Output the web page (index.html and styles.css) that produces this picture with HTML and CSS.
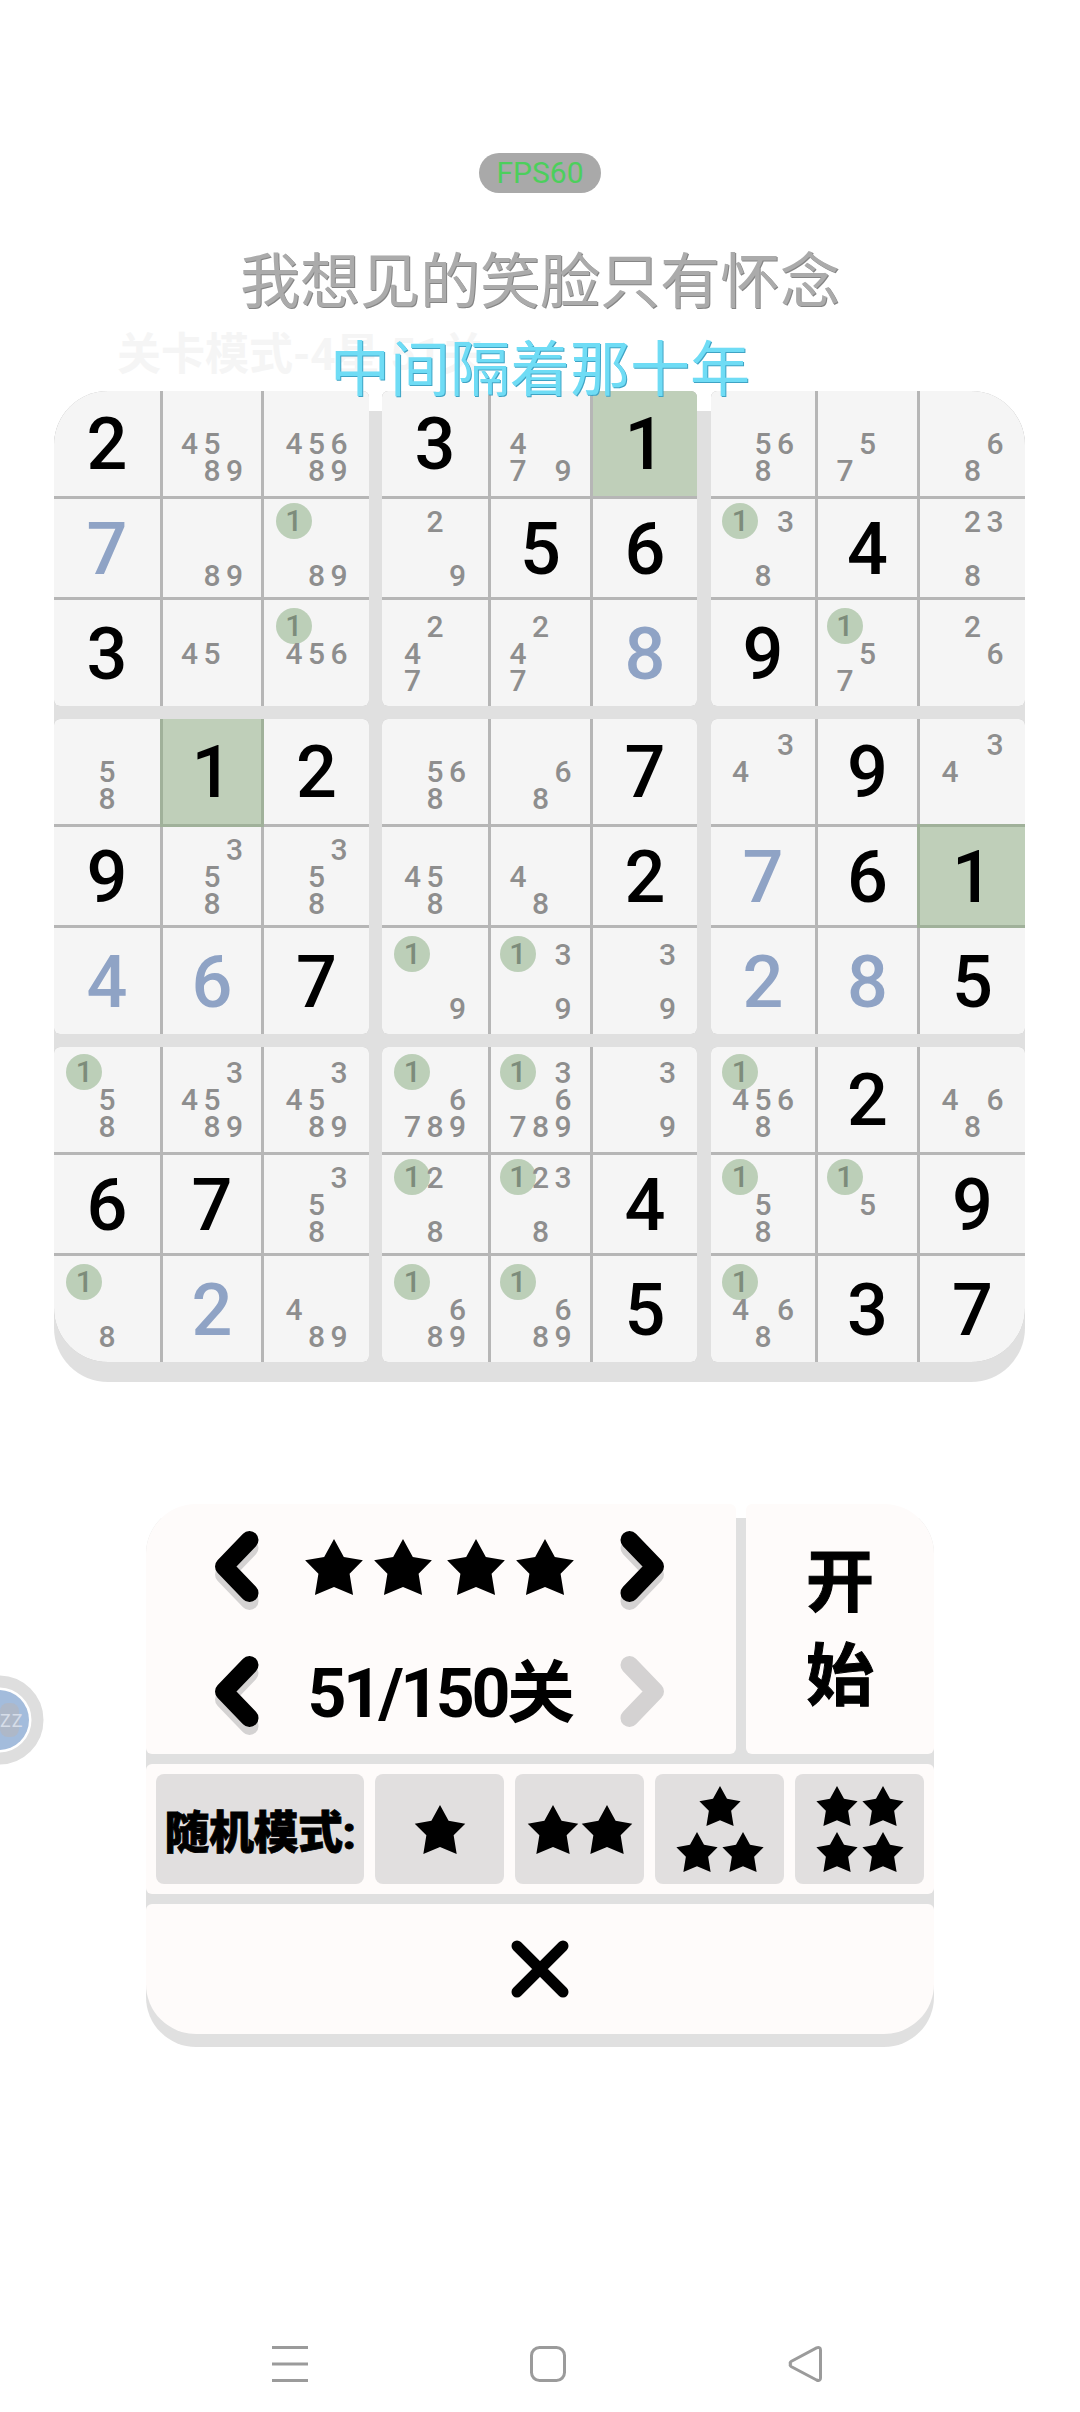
FILE: index.html
```html
<!DOCTYPE html>
<html lang="zh-CN">
<head>
    <meta charset="UTF-8">
    <meta name="viewport" content="width=device-width, initial-scale=1.0">
    <title>数独</title>
    <link rel="stylesheet" href="styles.css">
</head>
<body>
    <svg class="defs" width="0" height="0">
        <symbol id="star" viewBox="0 0 100 97">
            <polygon points="50,0 67,31 100,37 77,60 83,97 50,83 17,97 23,60 0,37 33,31"/>
        </symbol>
        <symbol id="chevron-left" viewBox="0 0 44 71">
            <path d="M34.5 9 L9 35.5 L34.5 62" fill="none" stroke="currentColor" stroke-width="18" stroke-linecap="round" stroke-linejoin="round"/>
        </symbol>
        <symbol id="chevron-right" viewBox="0 0 44 71">
            <path d="M9.5 9 L35 35.5 L9.5 62" fill="none" stroke="currentColor" stroke-width="18" stroke-linecap="round" stroke-linejoin="round"/>
        </symbol>
    </svg>

    <div class="page">
        <header class="mode-title">关卡模式-4星 51关</header>

        <!-- floating bits from the system, they sit over the page -->
        <div class="fps">FPS60</div>
        <div class="lyric lyric-one">我想见的笑脸只有怀念</div>
        <div class="lyric lyric-two">中间隔着那十年</div>
        <div class="ball">
            <svg width="45" height="90" viewBox="0 0 45 90">
                <circle cx="-1" cy="45" r="38.5" fill="none" stroke="#dedede" stroke-width="12"/>
                <circle cx="-1" cy="45" r="30" fill="#a3bcdc"/>
                <rect x="0" y="28" width="19" height="34" rx="8" fill="#aeb8c8"/>
            </svg>
            <span class="ball-text">ZZ</span>
        </div>

        <main class="board">
            <section class="box tl">
                <div class="cell given">2</div>
                <div class="cell notes"><span class="n4">4</span><span class="n5">5</span><span class="n8">8</span><span class="n9">9</span></div>
                <div class="cell notes"><span class="n4">4</span><span class="n5">5</span><span class="n6">6</span><span class="n8">8</span><span class="n9">9</span></div>
                <div class="cell filled">7</div>
                <div class="cell notes"><span class="n8">8</span><span class="n9">9</span></div>
                <div class="cell notes"><span class="n1">1</span><span class="n8">8</span><span class="n9">9</span></div>
                <div class="cell given">3</div>
                <div class="cell notes"><span class="n4">4</span><span class="n5">5</span></div>
                <div class="cell notes"><span class="n1">1</span><span class="n4">4</span><span class="n5">5</span><span class="n6">6</span></div>
            </section>
            <section class="box mid">
                <div class="cell given">3</div>
                <div class="cell notes"><span class="n4">4</span><span class="n7">7</span><span class="n9">9</span></div>
                <div class="cell given match">1</div>
                <div class="cell notes"><span class="n2">2</span><span class="n9">9</span></div>
                <div class="cell given">5</div>
                <div class="cell given">6</div>
                <div class="cell notes"><span class="n2">2</span><span class="n4">4</span><span class="n7">7</span></div>
                <div class="cell notes"><span class="n2">2</span><span class="n4">4</span><span class="n7">7</span></div>
                <div class="cell filled">8</div>
            </section>
            <section class="box right tr">
                <div class="cell notes"><span class="n5">5</span><span class="n6">6</span><span class="n8">8</span></div>
                <div class="cell notes"><span class="n5">5</span><span class="n7">7</span></div>
                <div class="cell notes"><span class="n6">6</span><span class="n8">8</span></div>
                <div class="cell notes"><span class="n1">1</span><span class="n3">3</span><span class="n8">8</span></div>
                <div class="cell given">4</div>
                <div class="cell notes"><span class="n2">2</span><span class="n3">3</span><span class="n8">8</span></div>
                <div class="cell given">9</div>
                <div class="cell notes"><span class="n1">1</span><span class="n5">5</span><span class="n7">7</span></div>
                <div class="cell notes"><span class="n2">2</span><span class="n6">6</span></div>
            </section>

            <section class="box">
                <div class="cell notes"><span class="n5">5</span><span class="n8">8</span></div>
                <div class="cell given match edged">1</div>
                <div class="cell given">2</div>
                <div class="cell given">9</div>
                <div class="cell notes"><span class="n3">3</span><span class="n5">5</span><span class="n8">8</span></div>
                <div class="cell notes"><span class="n3">3</span><span class="n5">5</span><span class="n8">8</span></div>
                <div class="cell filled">4</div>
                <div class="cell filled">6</div>
                <div class="cell given">7</div>
            </section>
            <section class="box mid">
                <div class="cell notes"><span class="n5">5</span><span class="n6">6</span><span class="n8">8</span></div>
                <div class="cell notes"><span class="n6">6</span><span class="n8">8</span></div>
                <div class="cell given">7</div>
                <div class="cell notes"><span class="n4">4</span><span class="n5">5</span><span class="n8">8</span></div>
                <div class="cell notes"><span class="n4">4</span><span class="n8">8</span></div>
                <div class="cell given">2</div>
                <div class="cell notes"><span class="n1">1</span><span class="n9">9</span></div>
                <div class="cell notes"><span class="n1">1</span><span class="n3">3</span><span class="n9">9</span></div>
                <div class="cell notes"><span class="n3">3</span><span class="n9">9</span></div>
            </section>
            <section class="box right">
                <div class="cell notes"><span class="n3">3</span><span class="n4">4</span></div>
                <div class="cell given">9</div>
                <div class="cell notes"><span class="n3">3</span><span class="n4">4</span></div>
                <div class="cell filled">7</div>
                <div class="cell given">6</div>
                <div class="cell given match edged">1</div>
                <div class="cell filled">2</div>
                <div class="cell filled">8</div>
                <div class="cell given">5</div>
            </section>

            <section class="box bl">
                <div class="cell notes"><span class="n1">1</span><span class="n5">5</span><span class="n8">8</span></div>
                <div class="cell notes"><span class="n3">3</span><span class="n4">4</span><span class="n5">5</span><span class="n8">8</span><span class="n9">9</span></div>
                <div class="cell notes"><span class="n3">3</span><span class="n4">4</span><span class="n5">5</span><span class="n8">8</span><span class="n9">9</span></div>
                <div class="cell given">6</div>
                <div class="cell given">7</div>
                <div class="cell notes"><span class="n3">3</span><span class="n5">5</span><span class="n8">8</span></div>
                <div class="cell notes"><span class="n1">1</span><span class="n8">8</span></div>
                <div class="cell filled">2</div>
                <div class="cell notes"><span class="n4">4</span><span class="n8">8</span><span class="n9">9</span></div>
            </section>
            <section class="box mid">
                <div class="cell notes"><span class="n1">1</span><span class="n6">6</span><span class="n7">7</span><span class="n8">8</span><span class="n9">9</span></div>
                <div class="cell notes"><span class="n1">1</span><span class="n3">3</span><span class="n6">6</span><span class="n7">7</span><span class="n8">8</span><span class="n9">9</span></div>
                <div class="cell notes"><span class="n3">3</span><span class="n9">9</span></div>
                <div class="cell notes"><span class="n1">1</span><span class="n2">2</span><span class="n8">8</span></div>
                <div class="cell notes"><span class="n1">1</span><span class="n2">2</span><span class="n3">3</span><span class="n8">8</span></div>
                <div class="cell given">4</div>
                <div class="cell notes"><span class="n1">1</span><span class="n6">6</span><span class="n8">8</span><span class="n9">9</span></div>
                <div class="cell notes"><span class="n1">1</span><span class="n6">6</span><span class="n8">8</span><span class="n9">9</span></div>
                <div class="cell given">5</div>
            </section>
            <section class="box right br">
                <div class="cell notes"><span class="n1">1</span><span class="n4">4</span><span class="n5">5</span><span class="n6">6</span><span class="n8">8</span></div>
                <div class="cell given">2</div>
                <div class="cell notes"><span class="n4">4</span><span class="n6">6</span><span class="n8">8</span></div>
                <div class="cell notes"><span class="n1">1</span><span class="n5">5</span><span class="n8">8</span></div>
                <div class="cell notes"><span class="n1">1</span><span class="n5">5</span></div>
                <div class="cell given">9</div>
                <div class="cell notes"><span class="n1">1</span><span class="n4">4</span><span class="n6">6</span><span class="n8">8</span></div>
                <div class="cell given">3</div>
                <div class="cell given">7</div>
            </section>
        </main>

        <section class="panel">
            <div class="panel-top">
                <div class="picker">
                    <div class="picker-row">
                        <svg class="chevron"><use href="#chevron-left"/></svg>
                        <div class="level-stars">
                            <svg class="star-lg"><use href="#star"/></svg>
                            <svg class="star-lg"><use href="#star"/></svg>
                            <svg class="star-lg second-pair"><use href="#star"/></svg>
                            <svg class="star-lg"><use href="#star"/></svg>
                        </div>
                        <svg class="chevron"><use href="#chevron-right"/></svg>
                    </div>
                    <div class="picker-row">
                        <svg class="chevron"><use href="#chevron-left"/></svg>
                        <div class="level-count">51/150关</div>
                        <svg class="chevron disabled"><use href="#chevron-right"/></svg>
                    </div>
                </div>
                <div class="start">开<br>始</div>
            </div>
            <div class="random">
                <div class="random-label">随机模式:</div>
                <div class="random-btn"><svg class="star-md"><use href="#star"/></svg></div>
                <div class="random-btn two"><svg class="star-md"><use href="#star"/></svg><svg class="star-md"><use href="#star"/></svg></div>
                <div class="random-btn small"><svg class="star-sm"><use href="#star"/></svg><svg class="star-sm"><use href="#star"/></svg><svg class="star-sm"><use href="#star"/></svg></div>
                <div class="random-btn small"><svg class="star-sm"><use href="#star"/></svg><svg class="star-sm"><use href="#star"/></svg><svg class="star-sm"><use href="#star"/></svg><svg class="star-sm"><use href="#star"/></svg></div>
            </div>
            <div class="close">
                <svg width="58" height="58" viewBox="0 0 58 58">
                    <path d="M6 6 L52 52 M52 6 L6 52" fill="none" stroke="#000" stroke-width="11" stroke-linecap="round"/>
                </svg>
            </div>
        </section>

        <nav class="navbar">
            <svg width="36" height="36" viewBox="0 0 36 36">
                <path d="M0 1.5 H36 M0 18 H36 M0 34.5 H36" stroke="#9b9b9b" stroke-width="3" fill="none"/>
            </svg>
            <svg width="36" height="36" viewBox="0 0 36 36">
                <rect x="1.5" y="1.5" width="33" height="33" rx="8" fill="none" stroke="#9b9b9b" stroke-width="3"/>
            </svg>
            <svg width="34" height="36" viewBox="0 0 34 36">
                <path d="M2.5 18 Q1.5 16.5 3.5 15.3 L28.5 1.9 Q32.5 0.5 32.5 4 V32 Q32.5 35.5 28.5 34 L3.5 20.7 Q1.5 19.5 2.5 18 Z" fill="none" stroke="#9b9b9b" stroke-width="3"/>
            </svg>
        </nav>
    </div>
</body>
</html>
```

FILE: styles.css
```css
/* Page */
body {
    margin: 0;
    padding: 0;
    background-color: #fff;
    font-family: Roboto, "Noto Sans CJK SC", sans-serif;
}

.defs {
    display: block;
    height: 0;
}

.page {
    position: relative;
    display: flex;
    flex-direction: column;
    width: 1080px;
    height: 2412px;
    overflow: hidden;
}

.mode-title {
    height: 58px;
    padding: 333px 0 0 117px;
    font-size: 44px;
    line-height: 44px;
    font-weight: 700;
    color: #f5f5f5;
}

/* Overlays */
.fps {
    position: absolute;
    left: 479px;
    top: 153px;
    width: 122px;
    height: 40px;
    border-radius: 20px;
    background-color: #a9a9a9;
    color: #4ccf5c;
    font-size: 30px;
    line-height: 40px;
    text-align: center;
}

.lyric {
    position: absolute;
    left: 0;
    width: 1080px;
    font-size: 60px;
    line-height: 70px;
    text-align: center;
    z-index: 2;
}

.lyric-one {
    top: 248px;
    color: #ababab;
    text-shadow: 1px 1px 0 #858585;
}

.lyric-two {
    top: 336px;
    color: #6fdcf5;
    text-shadow: 1px 1px 0 #3fa3c4;
}

.ball {
    position: absolute;
    left: 0;
    top: 1675px;
    width: 45px;
    height: 90px;
}

.ball svg {
    display: block;
}

.ball-text {
    position: absolute;
    left: 0;
    top: 31px;
    font-size: 18px;
    line-height: 30px;
    letter-spacing: 1px;
    color: #d6dde8;
}

/* Board */
.board {
    display: grid;
    grid-template-columns: 315px 316px 314px;
    grid-auto-rows: 315px;
    column-gap: 13px;
    row-gap: 13px;
    width: 971px;
    margin-left: 54px;
    padding-bottom: 20px;
    border-radius: 54px;
    background: linear-gradient(to bottom, #fff 20px, #e0e0e0 20px);
}

.box {
    display: grid;
    grid-template-columns: 106px 98px 105px;
    grid-template-rows: 105px 98px 106px;
    gap: 3px;
    width: 315px;
    border-radius: 6px;
    background-color: #b6b6b6;
    overflow: hidden;
}

.box.mid {
    grid-template-columns: 106px 99px 104px;
}

.box.right {
    grid-template-columns: 104px 99px 105px;
    width: 314px;
}

.box.tl { border-top-left-radius: 54px; }
.box.tr { border-top-right-radius: 54px; }
.box.bl { border-bottom-left-radius: 54px; }
.box.br { border-bottom-right-radius: 54px; }

.cell {
    background-color: #f5f5f5;
}

.given,
.filled {
    display: flex;
    align-items: center;
    justify-content: center;
    padding-top: 2px;
    font-size: 72px;
    font-weight: 500;
}

.given {
    color: #000;
}

.filled {
    color: #8fa3c5;
}

.match {
    background-color: #bfcfb9;
}

.edged {
    box-shadow: 0 0 0 3px #a0b19a;
}

.notes {
    display: grid;
    grid-template-columns: repeat(3, 22.5px);
    grid-template-rows: repeat(3, 27px);
    place-content: center;
    font-size: 30px;
    font-weight: 500;
    line-height: 27px;
    color: #8e8e8e;
    text-align: center;
}

.n1 { grid-column: 1; grid-row: 1; }
.n2 { grid-column: 2; grid-row: 1; }
.n3 { grid-column: 3; grid-row: 1; }
.n4 { grid-column: 1; grid-row: 2; }
.n5 { grid-column: 2; grid-row: 2; }
.n6 { grid-column: 3; grid-row: 2; }
.n7 { grid-column: 1; grid-row: 3; }
.n8 { grid-column: 2; grid-row: 3; }
.n9 { grid-column: 3; grid-row: 3; }

/* the 1 is the number being hinted */
.n1 {
    width: 36px;
    height: 36px;
    margin: -5px -7px -4px;
    border-radius: 50%;
    background-color: #bccfb8;
    color: #7d8c7b;
    line-height: 36px;
}

/* Level panel */
.panel {
    display: flex;
    flex-direction: column;
    gap: 10px;
    width: 788px;
    margin: 122px 0 0 146px;
    padding-bottom: 13px;
    border-radius: 50px;
    background: linear-gradient(to bottom, #fff 14px, #e0e0e0 14px);
}

.panel-top {
    display: flex;
    gap: 10px;
    height: 250px;
}

.picker {
    display: flex;
    flex-direction: column;
    gap: 54px;
    width: 590px;
    padding-top: 27px;
    box-sizing: border-box;
    border-radius: 50px 6px 6px 6px;
    background-color: #fefbfa;
}

.picker-row {
    display: flex;
    align-items: center;
    justify-content: space-between;
    height: 71px;
    padding: 0 72px 0 69px;
}

.chevron {
    width: 44px;
    height: 71px;
    overflow: visible;
    color: #000;
    filter: drop-shadow(0 8px 0 #d4d2d2);
}

.chevron.disabled {
    color: #d4d2d2;
    filter: none;
}

.level-stars {
    display: flex;
    gap: 11px;
}

.star-lg {
    width: 58px;
    height: 56px;
}

.second-pair {
    margin-left: 4px;
}

.level-count {
    padding-top: 5px;
    font-size: 68px;
    font-weight: 700;
    line-height: 71px;
    letter-spacing: -3.5px;
    color: #000;
}

.start {
    display: flex;
    flex: 1;
    align-items: center;
    justify-content: center;
    padding-top: 2px;
    border-radius: 6px 50px 6px 6px;
    background-color: #fefbfa;
    font-size: 68px;
    font-weight: 700;
    line-height: 94px;
    text-align: center;
    color: #000;
    -webkit-text-stroke: 1px #000;
}

.random {
    display: flex;
    gap: 11px;
    height: 130px;
    padding: 10px;
    box-sizing: border-box;
    border-radius: 6px;
    background-color: #fefbfa;
}

.random-label {
    display: flex;
    align-items: center;
    justify-content: center;
    width: 208px;
    border-radius: 8px;
    background-color: #e1dfdf;
    font-size: 45px;
    font-weight: 900;
    letter-spacing: -0.5px;
    color: #000;
    -webkit-text-stroke: 0.8px #000;
}

.random-btn {
    display: flex;
    flex-wrap: wrap;
    align-items: center;
    justify-content: center;
    width: 129px;
    border-radius: 8px;
    background-color: #e1dfdf;
}

.random-btn.two {
    gap: 2px;
}

.random-btn.small {
    align-content: center;
    gap: 6px 4px;
    padding: 0 20px;
    box-sizing: border-box;
}

/* first star of three sits alone on top */
.random-btn.small .star-sm:first-child:nth-last-child(3) {
    margin: 0 23px;
}

.star-md {
    width: 52px;
    height: 49px;
}

.star-sm {
    width: 42px;
    height: 40px;
}

.close {
    display: flex;
    align-items: center;
    justify-content: center;
    height: 130px;
    border-radius: 6px 6px 50px 50px;
    background-color: #fefbfa;
}

/* System bar */
.navbar {
    display: flex;
    justify-content: space-between;
    width: 550px;
    margin: 299px 0 0 272px;
}
```
